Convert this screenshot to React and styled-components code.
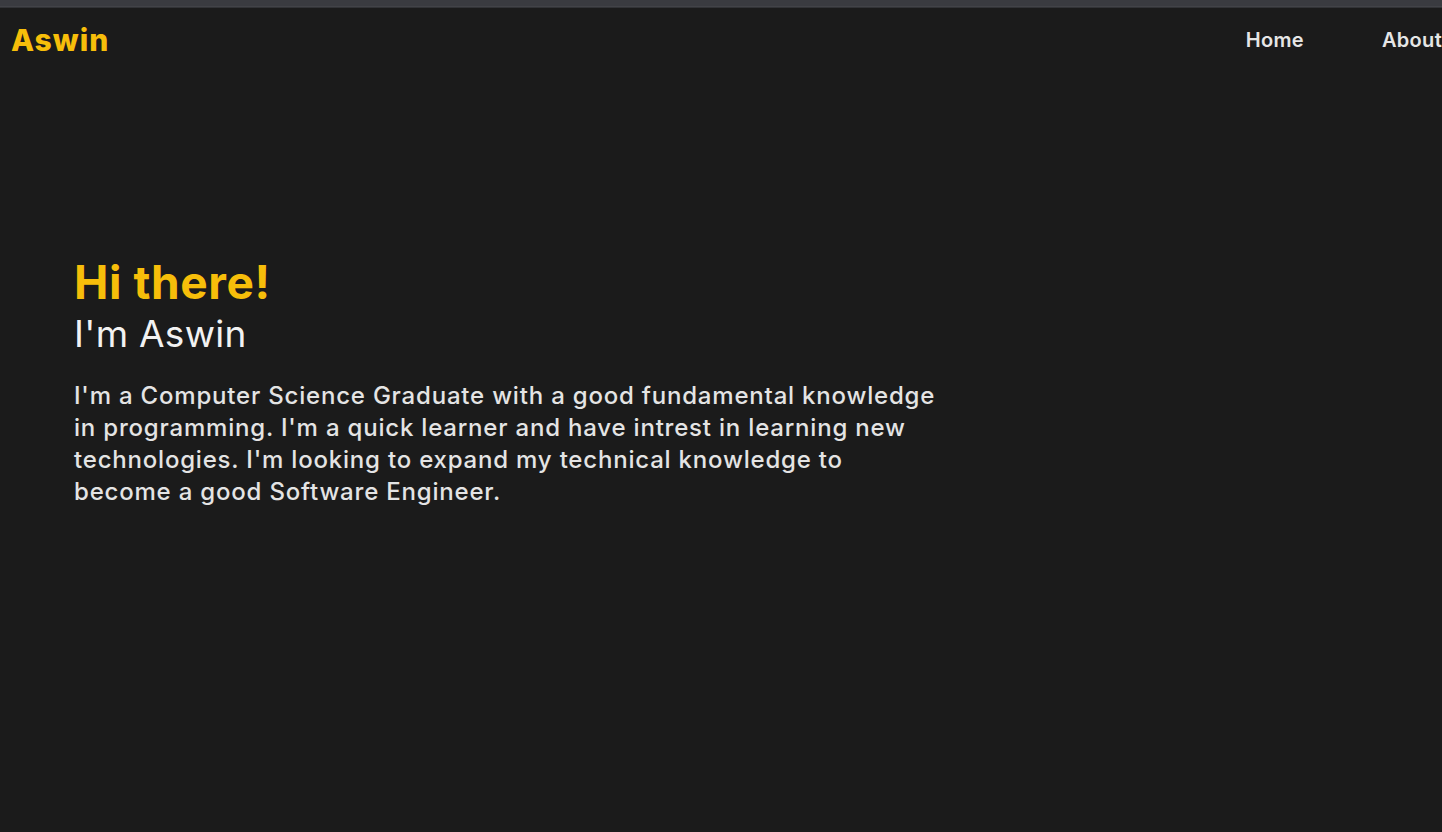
import React from 'react';
import styled, { createGlobalStyle } from 'styled-components';

const GlobalStyle = createGlobalStyle`
  html, body {
    margin: 0;
    padding: 0;
    background: #1b1b1b;
    font-family: Inter, "Noto Sans", sans-serif;
    overflow: hidden;
  }
`;

const Page = styled.div`
  min-height: 832px;
  display: flex;
  flex-direction: column;
  background: #1b1b1b;
`;

const ChromeStrip = styled.div`
  height: 8px;
  background: linear-gradient(to bottom, #3a3b40 0%, #3a3b40 70%, #4a4b50 75%, #2a2b2e 100%);
`;

const NavBar = styled.nav`
  height: 64px;
  display: flex;
  align-items: center;
  justify-content: space-between;
  padding-left: 11px;
`;

const Logo = styled.div`
  color: #f7be0a;
  font-size: 30px;
  font-weight: 800;
  letter-spacing: 1px;
`;

const NavLinks = styled.ul`
  display: flex;
  gap: 78px;
  list-style: none;
  margin: 0;
  padding: 0;
`;

const NavLink = styled.li`
  color: #e6e6e6;
  font-size: 20px;
  font-weight: 600;
  letter-spacing: 0.3px;
  white-space: nowrap;
`;

const Hero = styled.section`
  padding: 183px 74px 0;
`;

const Greeting = styled.h1`
  margin: 0;
  color: #f7be0a;
  font-size: 46px;
  font-weight: 700;
  line-height: 55px;
  letter-spacing: 0.6px;
`;

const Name = styled.h2`
  margin: 0;
  color: #f2f2f2;
  font-size: 37px;
  font-weight: 400;
  line-height: 48px;
  letter-spacing: 0.3px;
`;

const Bio = styled.p`
  margin: 22px 0 0;
  max-width: 866px;
  color: #e4e4e4;
  font-size: 24px;
  font-weight: 500;
  line-height: 32px;
  letter-spacing: 0.8px;
`;

export default function App() {
  return (
    <>
      <GlobalStyle />
      <Page>
        <ChromeStrip />
        <NavBar>
          <Logo>Aswin</Logo>
          <NavLinks>
            <NavLink>Home</NavLink>
            <NavLink>About</NavLink>
          </NavLinks>
        </NavBar>
        <Hero>
          <Greeting>Hi there!</Greeting>
          <Name>I'm Aswin</Name>
          <Bio>
            I'm a Computer Science Graduate with a good fundamental knowledge in programming. I'm a quick learner and have intrest in learning new technologies. I'm looking to expand my technical knowledge to become a good Software Engineer.
          </Bio>
        </Hero>
      </Page>
    </>
  );
}
